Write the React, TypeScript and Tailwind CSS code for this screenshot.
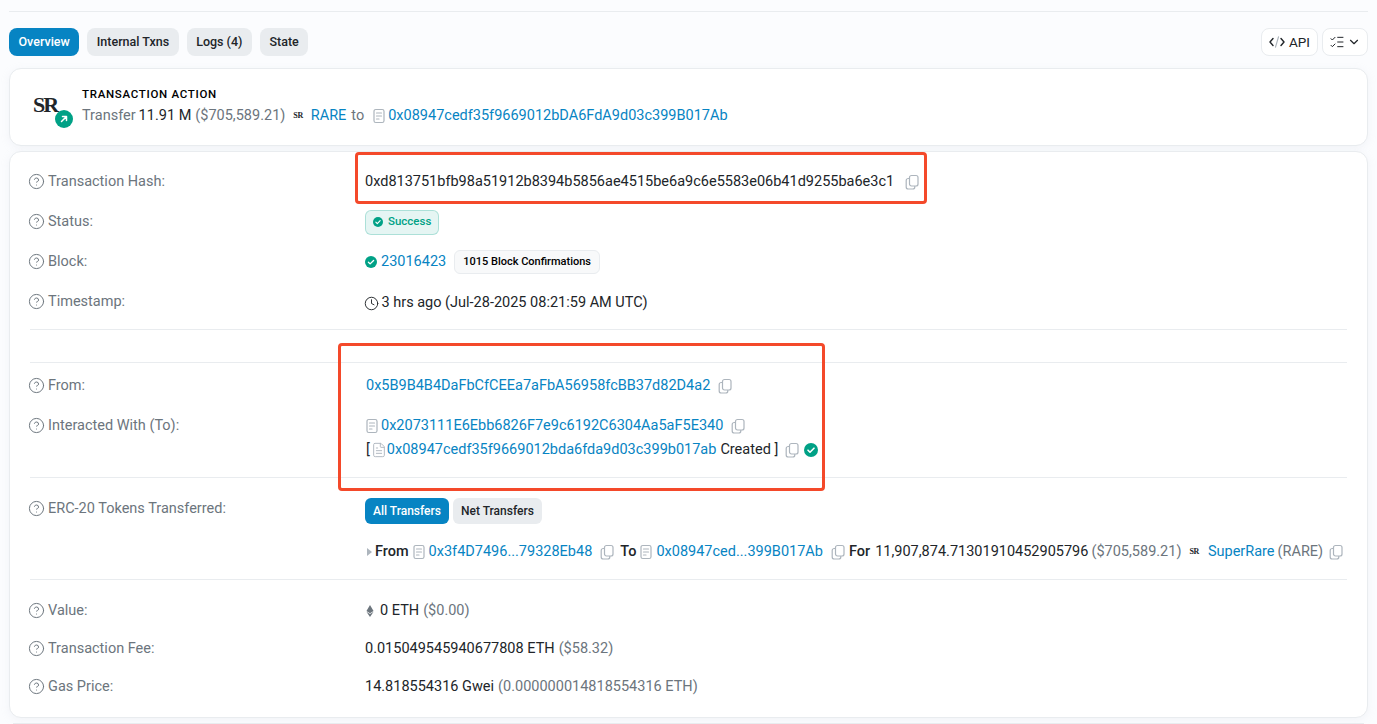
import { ChevronDown, CircleHelp, Clock, FileText, ListChecks } from "lucide-react"
import { FaEthereum } from "react-icons/fa"

const CopyIcon = ({ className = "" }: { className?: string }) => (
  <svg width="16" height="16" viewBox="0 0 16 16" fill="none" stroke="#adb5bd" strokeWidth="1.2" className={`shrink-0 ${className}`}>
    <rect x="5.5" y="1.5" width="8.5" height="10.5" rx="2" />
    <path d="M5.5 4.5H4.2a2 2 0 0 0-2 2v6.5a2 2 0 0 0 2 2h4.6a2 2 0 0 0 2-2V12" />
  </svg>
)

const ContractIcon = ({ className = "" }: { className?: string }) => (
  <svg width="16" height="16" viewBox="0 0 16 16" fill="none" stroke="#adb5bd" strokeWidth="1.2" strokeLinecap="round" className={`shrink-0 ${className}`}>
    <rect x="3" y="1.5" width="10" height="13" rx="1.8" />
    <path d="M5.5 5h5M5.5 8h5M5.5 11h2.5" />
  </svg>
)

const CheckBadge = ({ size = 14, className = "" }: { size?: number; className?: string }) => (
  <svg width={size} height={size} viewBox="0 0 14 14" className={`shrink-0 ${className}`}>
    <circle cx="7" cy="7" r="7" fill="#00a186" />
    <path d="M4 7.2l2 2 4-4" fill="none" stroke="#fff" strokeWidth="1.6" strokeLinecap="round" strokeLinejoin="round" />
  </svg>
)

const Sr = ({ className }: { className: string }) => (
  <span className={`font-['Liberation_Serif',serif] font-bold text-[#212529] ${className}`}>SR</span>
)

const Row = ({ label, className = "h-10", children }: { label: string; className?: string; children: React.ReactNode }) => (
  <div className={`flex ${className}`}>
    <div className="w-[335px] h-10 shrink-0 flex items-center gap-[3px] text-[#6c757d]">
      <CircleHelp size={17} strokeWidth={1.4} className="text-[#6c757d] -ml-0.5 -mt-px" />
      {label}:
    </div>
    <div className="flex-1 min-w-0">{children}</div>
  </div>
)

const Line = ({ className = "h-10", children }: { className?: string; children: React.ReactNode }) => (
  <div className={`flex items-center whitespace-nowrap ${className}`}>{children}</div>
)

const Link = ({ children }: { children: React.ReactNode }) => <span className="text-[#0784c3]">{children}</span>
const Muted = ({ children }: { children: React.ReactNode }) => <span className="text-[#6c757d]">{children}</span>

const Tab = ({ label, active = false }: { label: string; active?: boolean }) => (
  <div
    className={`h-7 px-[9.5px] flex items-center rounded-lg text-[12.5px] font-medium ${
      active ? "bg-[#0784c3] text-white" : "bg-[#e9ecef] text-[#212529]"
    }`}
  >
    {label}
  </div>
)

export default function App() {
  return (
    <div className="relative h-[724px] overflow-hidden bg-[#fbfcfe] px-[9px] pt-[11px] font-['Roboto',sans-serif] text-[14.5px] text-[#212529]">
      <div className="border-t border-[#e9ecef]" />

      {/* Tabs */}
      <div className="mt-4 flex items-center justify-between">
        <div className="flex gap-[8px]">
          <Tab label="Overview" active />
          <Tab label="Internal Txns" />
          <Tab label="Logs (4)" />
          <Tab label="State" />
        </div>
        <div className="flex gap-1">
          <div className="h-7 w-[57px] flex items-center justify-center gap-1 rounded-lg border border-[#e9ecef] bg-white text-[13.5px]">
            <svg width="16" height="12" viewBox="0 0 16 12" fill="none" strokeLinecap="round" strokeLinejoin="round">
              <path d="M4 2.5L1 6l3 3.5M12 2.5L15 6l-3 3.5" stroke="#212529" strokeWidth="1.4" />
              <path d="M9.5 0.8L6.5 11.2" stroke="#adb5bd" strokeWidth="1.2" />
            </svg>
            API
          </div>
          <div className="h-7 w-[46px] flex items-center justify-center gap-0.5 rounded-lg border border-[#e9ecef] bg-white">
            <ListChecks size={16} strokeWidth={1.5} />
            <ChevronDown size={14} strokeWidth={2} />
          </div>
        </div>
      </div>

      {/* Transaction action */}
      <div className="mt-3 h-[78px] flex items-center rounded-xl border border-[#e9ecef] bg-white pl-[22px] shadow-[0_2px_8px_rgba(189,197,209,0.15)]">
        <div className="relative w-[42px] h-9 shrink-0 mr-2">
          <Sr className="absolute left-px top-px text-[22px] leading-[30px] tracking-[-2px]" />
          <div className="absolute left-[23px] top-[21px] w-[18px] h-[18px] rounded-full bg-[#00a186] flex items-center justify-center">
            <svg width="10" height="10" viewBox="0 0 10 10" fill="none" stroke="#fff" strokeWidth="1.5" strokeLinecap="round" strokeLinejoin="round">
              <path d="M2.5 7.5l5-5M3.5 2.5h4v4" />
            </svg>
          </div>
        </div>
        <div className="mb-[3px]">
          <div className="text-[11.5px] font-medium tracking-[0.7px] text-black leading-4">TRANSACTION ACTION</div>
          <div className="mt-1 flex items-center whitespace-nowrap leading-5">
            <Muted>Transfer</Muted>
            <span className="ml-[3px]">11.91 M</span>
            <span className="ml-1"><Muted>($705,589.21)</Muted></span>
            <Sr className="ml-2 mr-2 text-[8px] tracking-tighter" />
            <Link>RARE</Link>
            <span className="ml-[5px] mr-[7px]"><Muted>to</Muted></span>
            <ContractIcon className="mr-px" />
            <Link>0x08947cedf35f9669012bDA6FdA9d03c399B017Ab</Link>
          </div>
        </div>
      </div>

      {/* Details */}
      <div className="mt-[5px] h-[567px] rounded-xl border border-[#e9ecef] bg-white px-5 pt-[10px] shadow-[0_2px_8px_rgba(189,197,209,0.15)]">
        <Row label="Transaction Hash">
          <Line>
            0xd813751bfb98a51912b8394b5856ae4515be6a9c6e5583e06b41d9255ba6e3c1
            <CopyIcon className="ml-2.5" />
          </Line>
        </Row>
        <Row label="Status">
          <Line>
            <div className="h-[25px] px-[7px] flex items-center gap-[5px] rounded-md border border-[#00a186]/25 bg-[#00a186]/10 text-[11.5px] font-medium text-[#00a186]">
              <CheckBadge size={10} />
              Success
            </div>
          </Line>
        </Row>
        <Row label="Block">
          <Line>
            <CheckBadge size={12} />
            <span className="ml-1"><Link>23016423</Link></span>
            <div className="ml-2 h-6 px-2 flex items-center rounded-md border border-[#e9ecef] bg-[#f8f9fa] text-[11px] font-medium text-black">
              1015 Block Confirmations
            </div>
          </Line>
        </Row>
        <Row label="Timestamp">
          <Line className="h-10 mt-px">
            <Clock size={15} strokeWidth={1.5} className="-ml-[1.5px] mr-[3px]" />
            3 hrs ago (Jul-28-2025 08:21:59 AM UTC)
          </Line>
        </Row>

        <div className="mt-[7px] border-t border-[#e9ecef]" />
        <div className="mt-8 border-t border-[#e9ecef]" />

        <Row label="From" className="h-10 mt-[3px]">
          <Line className="h-10 pl-px">
            <Link>0x5B9B4B4DaFbCfCEEa7aFbA56958fcBB37d82D4a2</Link>
            <CopyIcon className="ml-[7px]" />
          </Line>
        </Row>
        <Row label="Interacted With (To)" className="h-[71px]">
          <Line className="h-10 -ml-px">
            <ContractIcon className="mr-px" />
            <Link>0x2073111E6Ebb6826F7e9c6192C6304Aa5aF5E340</Link>
            <CopyIcon className="ml-[7px]" />
          </Line>
          <Line className="h-2 pl-px">
            [
            <FileText size={16} strokeWidth={1.4} className="text-[#adb5bd] shrink-0 ml-px" />
            <Link>0x08947cedf35f9669012bda6fda9d03c399b017ab</Link>
            <span className="ml-1">Created ]</span>
            <CopyIcon className="ml-1.5" />
            <CheckBadge size={14} className="ml-1" />
          </Line>
        </Row>

        <div className="border-t border-[#e9ecef]" />

        <Row label="ERC-20 Tokens Transferred" className="h-[101px] mt-[11px]">
          <div className="flex gap-1 mt-[9px]">
            <div className="h-[26px] px-2 flex items-center rounded-md bg-[#0784c3] text-white text-xs font-medium">All Transfers</div>
            <div className="h-[26px] px-2 flex items-center rounded-md bg-[#e9ecef] text-xs font-medium">Net Transfers</div>
          </div>
          <Line className="h-6 mt-4 -mr-2">
            <span className="w-0 h-0 mx-[2px] border-y-4 border-y-transparent border-l-[5px] border-l-[#adb5bd]" />
            <span className="ml-[1px] font-medium">From</span>
            <ContractIcon className="ml-[2px] mr-[2px]" />
            <Link>0x3f4D7496...79328Eb48</Link>
            <CopyIcon className="ml-[7px] mr-[5px]" />
            <span className="font-medium">To</span>
            <ContractIcon className="ml-[2px] mr-[2px]" />
            <Link>0x08947ced...399B017Ab</Link>
            <CopyIcon className="ml-[7px] mr-[3px]" />
            <span className="font-medium">For</span>
            <span className="ml-[5px]">11,907,874.71301910452905796</span>
            <span className="ml-[3px]"><Muted>($705,589.21)</Muted></span>
            <Sr className="ml-2 mr-[9px] text-[8px] tracking-tighter" />
            <Link>SuperRare</Link>
            <span className="ml-[3px]"><Muted>(RARE)</Muted></span>
            <CopyIcon className="ml-[5px]" />
          </Line>
        </Row>

        <div className="border-t border-[#e9ecef] -mt-[11px]" />

        <Row label="Value" className="h-[38px] mt-[11px]">
          <Line>
            <FaEthereum size={12} className="text-[#6c757d] -ml-px mr-1" />
            0 ETH
            <span className="ml-1"><Muted>($0.00)</Muted></span>
          </Line>
        </Row>
        <Row label="Transaction Fee" className="h-[38px]">
          <Line>
            0.015049545940677808 ETH
            <span className="ml-1"><Muted>($58.32)</Muted></span>
          </Line>
        </Row>
        <Row label="Gas Price" className="h-[38px]">
          <Line>
            14.818554316 Gwei
            <span className="ml-1"><Muted>(0.000000014818554316 ETH)</Muted></span>
          </Line>
        </Row>
      </div>
      <div className="mt-[5px] mx-1 border-t border-[#e9ecef]" />

      {/* Highlight boxes drawn over the page */}
      <div className="absolute left-[355px] top-[152px] w-[572px] h-[52px] rounded border-[3px] border-[#f4492a]" />
      <div className="absolute left-[338px] top-[343px] w-[487px] h-[148px] rounded border-[3px] border-[#f4492a]" />
    </div>
  )
}
